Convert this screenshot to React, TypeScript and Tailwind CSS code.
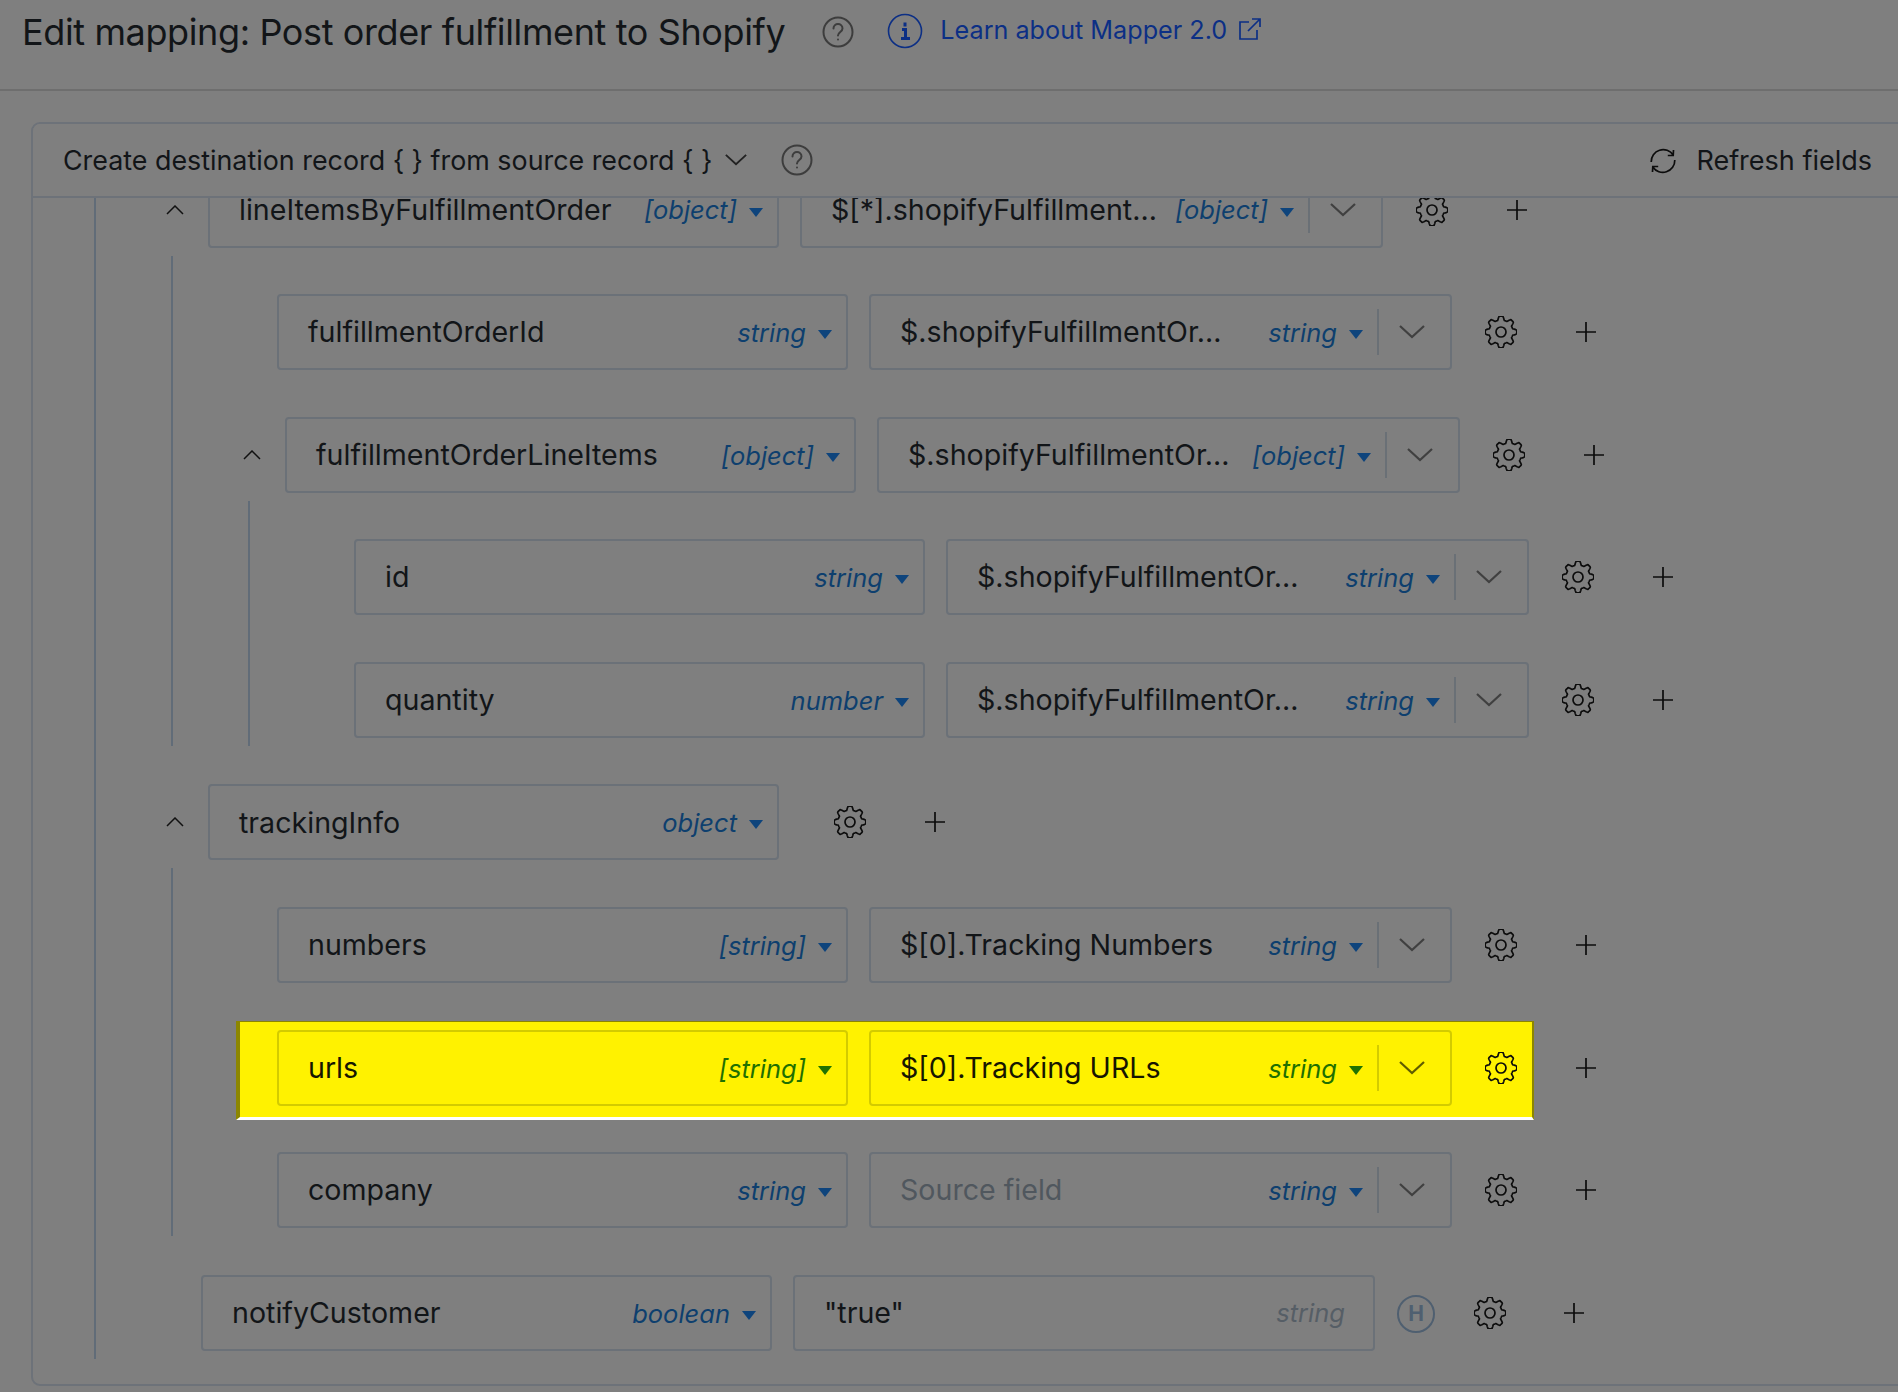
import React from "react";

const font = { fontFamily: "Inter, 'Liberation Sans', sans-serif" };

function gearPath() {
  const pts: string[] = [];
  const n = 240;
  for (let i = 0; i <= n; i++) {
    const a = (i / n) * Math.PI * 2;
    const w = Math.cos(a * 8);
    const s = Math.max(-1, Math.min(1, w * 1.7));
    const r = 13.9 + 1.9 * s;
    pts.push(`${(16 + r * Math.sin(a)).toFixed(2)} ${(16 - r * Math.cos(a)).toFixed(2)}`);
  }
  return "M" + pts.join("L") + "Z";
}
const GEAR = gearPath();

function Gear() {
  return (
    <svg width="32" height="32" viewBox="0 0 32 32" fill="none" stroke="#0c0c0c" strokeWidth="1.7" className="shrink-0">
      <path d={GEAR} strokeLinejoin="round" />
      <circle cx="16" cy="16" r="5" />
    </svg>
  );
}

function Plus() {
  return (
    <svg width="22" height="22" viewBox="0 0 22 22" stroke="#0c0c0c" strokeWidth="1.7" className="shrink-0">
      <path d="M11 1v20M1 11h20" />
    </svg>
  );
}

function Triangle({ hl }: { hl?: boolean }) {
  return (
    <svg width="14" height="9" viewBox="0 0 14 9" className="shrink-0 mt-[5px]">
      <path d="M0 0h14L7 9z" fill={hl ? "#1f7300" : "#0e447c"} />
    </svg>
  );
}

function Down({ color = "#444", w = 26 }: { color?: string; w?: number }) {
  return (
    <svg width={w} height="14" viewBox="0 0 26 14" fill="none" stroke={color} strokeWidth="2.2" className="shrink-0">
      <path d="M1 1l12 11L25 1" />
    </svg>
  );
}

function Up() {
  return (
    <svg width="18" height="10" viewBox="0 0 18 10" fill="none" stroke="#111" strokeWidth="1.5" className="shrink-0">
      <path d="M1 9l8-8 8 8" />
    </svg>
  );
}

type FieldProps = {
  name: string;
  type: string;
  hl?: boolean;
};

function DestField({ name, type, hl }: FieldProps) {
  return (
    <div
      className={`w-[571px] h-full shrink-0 flex items-center pl-[29px] pr-[14px] rounded-[4px] border-2 ${
        hl ? "border-[#d3cb00]" : "border-[#6b7178]"
      }`}
    >
      <span className={`flex-1 text-[28.6px] mt-[1px] ${hl ? "text-[#161600]" : "text-[#121518]"}`}>{name}</span>
      <span className={`italic text-[25.5px] mt-[2px] mr-[12px] ${hl ? "text-[#1f7000]" : "text-[#0e3f6e]"}`}>{type}</span>
      <Triangle hl={hl} />
    </div>
  );
}

function SourceField({
  value,
  type,
  hl,
  placeholder,
}: {
  value: string;
  type: string;
  hl?: boolean;
  placeholder?: boolean;
}) {
  return (
    <div
      className={`w-[583px] h-full shrink-0 flex items-center pl-[29px] rounded-[4px] border-2 ${
        hl ? "border-[#d3cb00]" : "border-[#6b7178]"
      }`}
    >
      <span
        className={`flex-1 text-[28.6px] mt-[1px] ${
          placeholder ? "text-[#50575e]" : hl ? "text-[#161600]" : "text-[#121518]"
        }`}
      >
        {value}
      </span>
      <span className={`italic text-[25.5px] mt-[2px] mr-[12px] ${hl ? "text-[#1f7000]" : "text-[#0e3f6e]"}`}>{type}</span>
      <Triangle hl={hl} />
      <span className={`w-[2px] h-[46px] ml-[14px] ${hl ? "bg-[#d3cb00]" : "bg-[#6a7076]"}`} />
      <span className="w-[71px] flex justify-center pr-[5px]">
        <Down color={hl ? "#5f5c00" : "#404040"} />
      </span>
    </div>
  );
}

function Row({
  offset,
  caret,
  dest,
  source,
  hl,
}: {
  offset: string;
  caret?: boolean;
  dest: FieldProps;
  source?: { value: string; type: string; placeholder?: boolean };
  hl?: boolean;
}) {
  return (
    <div className="flex items-center h-[76px]">
      <div className={`${offset} shrink-0 flex justify-end pr-[24px]`}>{caret && <Up />}</div>
      <DestField {...dest} hl={hl} />
      {source ? (
        <>
          <div className="w-[21px] shrink-0" />
          <SourceField {...source} hl={hl} />
          <div className="w-[33px] shrink-0" />
          <Gear />
        </>
      ) : (
        <>
          <div className="w-[55px] shrink-0" />
          <Gear />
        </>
      )}
      <div className="w-[58px] shrink-0" />
      <Plus />
    </div>
  );
}

export default function App() {
  return (
    <div className="w-full h-[1392px] overflow-hidden bg-[#7f7f7f]" style={font}>
      <header className="h-[91px] border-b-2 border-[#6e6e6e] flex items-start pl-[22px] pt-[8px]">
        <h1 className="text-[36px] leading-[48px] tracking-[-0.38px] text-[#121518] font-normal">
          Edit mapping: Post order fulfillment to Shopify
        </h1>
        <svg width="32" height="32" viewBox="0 0 32 32" fill="none" stroke="#3d3d3d" strokeWidth="2" className="ml-[37px] mt-[8px] shrink-0">
          <circle cx="16" cy="16" r="14.5" />
          <path d="M11.5 12.5c0-6 9-6 9 0 0 3.5-4.5 3.5-4.5 7" strokeLinecap="round" />
          <circle cx="16" cy="23.5" r="1" fill="#3d3d3d" stroke="none" />
        </svg>
        <svg width="36" height="36" viewBox="0 0 36 36" fill="none" className="ml-[33px] mt-[5px] shrink-0">
          <circle cx="18" cy="18" r="16.5" stroke="#0c2f85" strokeWidth="1.6" />
          <path d="M18 9.5v4M15 16.5h3.5v8.5M14 25.5h9" stroke="#0c2f85" strokeWidth="3" />
        </svg>
        <a className="ml-[17px] mt-[4px] text-[25.2px] leading-[36px] text-[#0c2f85]">Learn about Mapper 2.0</a>
        <svg width="24" height="24" viewBox="0 0 24 24" fill="none" stroke="#0c2f85" strokeWidth="1.7" className="ml-[11px] mt-[9px] shrink-0">
          <path d="M11 5H2v17h17v-9M10 14L22 2M14 2h8v8" />
        </svg>
      </header>

      <section className="ml-[31px] mt-[31px] w-[1900px] h-[1264px] rounded-[9px] border-2 border-[#6d7279] overflow-hidden">
        <div className="h-[74px] border-b-2 border-[#6d7279] flex items-center pl-[30px] relative z-10 bg-[#7f7f7f]">
          <span className="text-[26.85px] text-[#121518]">Create destination record {"{ }"} from source record {"{ }"}</span>
          <span className="ml-[12px] flex">
            <Down w={22} color="#222" />
          </span>
          <svg width="32" height="32" viewBox="0 0 32 32" fill="none" stroke="#3d3d3d" strokeWidth="2" className="ml-[34px] shrink-0">
            <circle cx="16" cy="16" r="14.5" />
            <path d="M11.5 12.5c0-6 9-6 9 0 0 3.5-4.5 3.5-4.5 7" strokeLinecap="round" />
            <circle cx="16" cy="23.5" r="1" fill="#3d3d3d" stroke="none" />
          </svg>
          <div className="ml-auto mr-[57px] flex items-center mt-[2px]">
            <svg width="26" height="26" viewBox="0 0 26 26" fill="none" stroke="#0c0c0c" strokeWidth="1.7" className="shrink-0 ml-[1px]">
              <path d="M1.2 14A12 12 0 0 1 23.2 7M23.5 2L23.2 7.5L17.8 7.5" />
              <path d="M24.8 12A12 12 0 0 1 2.8 19M2.5 24L2.8 18.5L8.2 18.5" />
            </svg>
            <span className="ml-[20px] text-[27px] text-[#121518]">Refresh fields</span>
          </div>
        </div>

        <div className="ml-[61px] -mt-[26.5px] pb-[8px] border-l-2 border-[#616c78]">
          <Row
            offset="w-[112px]"
            caret
            dest={{ name: "lineItemsByFulfillmentOrder", type: "[object]" }}
            source={{ value: "$[*].shopifyFulfillment...", type: "[object]" }}
          />
          <div className="ml-[75px] mt-[8px] pt-[38.6px] border-l-2 border-[#616c78] flex flex-col gap-[46.6px]">
            <Row
              offset="w-[104px]"
              dest={{ name: "fulfillmentOrderId", type: "string" }}
              source={{ value: "$.shopifyFulfillmentOr...", type: "string" }}
            />
            <div>
              <Row
                offset="w-[112px]"
                caret
                dest={{ name: "fulfillmentOrderLineItems", type: "[object]" }}
                source={{ value: "$.shopifyFulfillmentOr...", type: "[object]" }}
              />
              <div className="ml-[75px] mt-[8px] pt-[38.6px] pb-[8px] border-l-2 border-[#616c78] flex flex-col gap-[46.6px]">
                <Row
                  offset="w-[104px]"
                  dest={{ name: "id", type: "string" }}
                  source={{ value: "$.shopifyFulfillmentOr...", type: "string" }}
                />
                <Row
                  offset="w-[104px]"
                  dest={{ name: "quantity", type: "number" }}
                  source={{ value: "$.shopifyFulfillmentOr...", type: "string" }}
                />
              </div>
            </div>
          </div>

          <div className="mt-[38.6px]">
            <Row offset="w-[112px]" caret dest={{ name: "trackingInfo", type: "object" }} />
          </div>
          <div className="ml-[75px] mt-[8px] pt-[38.6px] pb-[8px] border-l-2 border-[#616c78] flex flex-col gap-[46.6px]">
            <Row
              offset="w-[104px]"
              dest={{ name: "numbers", type: "[string]" }}
              source={{ value: "$[0].Tracking Numbers", type: "string" }}
            />
            <div className="relative">
              <div className="absolute left-[63px] -top-[8.5px] w-[1298px] h-[99px] bg-[#fff200] border-l-4 border-t border-r-2 border-b-[3px] border-l-[#8c8600] border-t-[#8c8600] border-r-[#8c8600] border-b-white" />
              <div className="relative">
                <Row
                  offset="w-[104px]"
                  hl
                  dest={{ name: "urls", type: "[string]" }}
                  source={{ value: "$[0].Tracking URLs", type: "string" }}
                />
              </div>
            </div>
            <Row
              offset="w-[104px]"
              dest={{ name: "company", type: "string" }}
              source={{ value: "Source field", type: "string", placeholder: true }}
            />
          </div>

          <div className="mt-[38.6px] flex items-center h-[76px] pl-[105px]">
            <DestField name="notifyCustomer" type="boolean" />
            <div className="w-[21px] shrink-0" />
            <div className="w-[582px] h-full shrink-0 flex items-center pl-[29px] pr-[28px] rounded-[4px] border-2 border-[#6b7178]">
              <span className="flex-1 text-[28.6px] mt-[1px] text-[#121518]">"true"</span>
              <span className="italic text-[25.5px] text-[#565e66]">string</span>
            </div>
            <div className="ml-[22px] mt-[2px] w-[38px] h-[38px] rounded-full border-2 border-[#4f5f70] flex items-center justify-center text-[21px] font-bold text-[#4f5f70] shrink-0">
              H
            </div>
            <div className="ml-[39px] flex">
              <Gear />
            </div>
            <div className="ml-[57px] flex">
              <Plus />
            </div>
          </div>
        </div>
      </section>
    </div>
  );
}
